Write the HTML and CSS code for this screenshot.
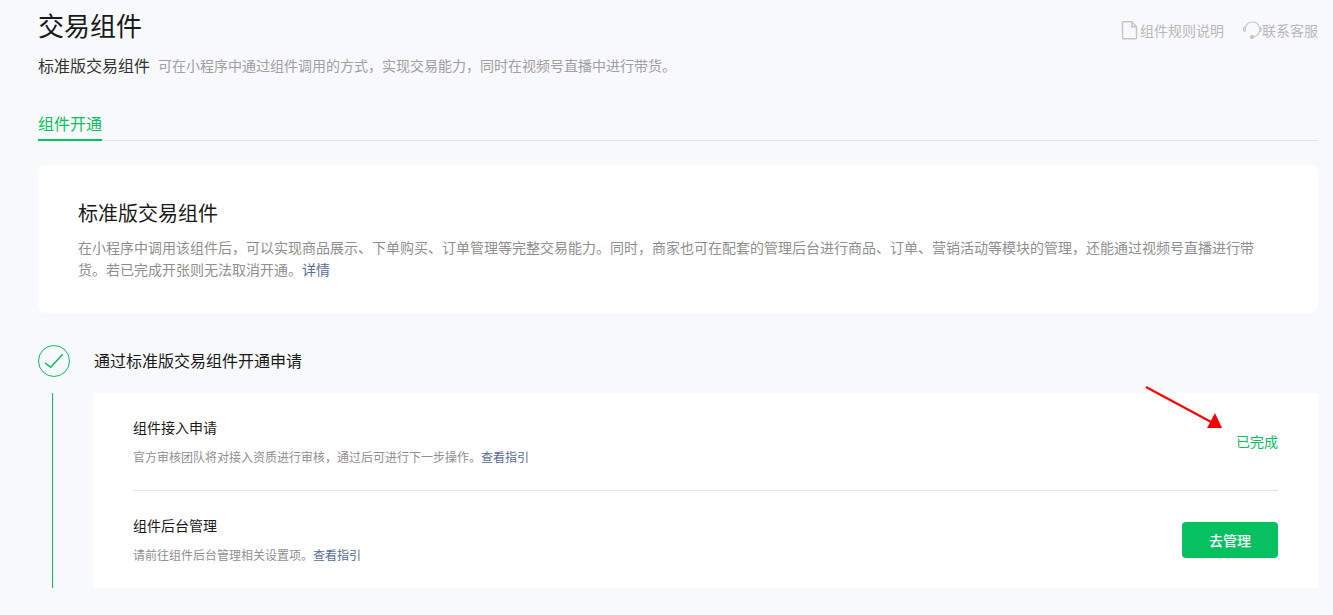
FILE: index.html
```html
<!DOCTYPE html>
<html lang="zh-CN">
<head>
<meta charset="utf-8">
<title>交易组件</title>
<link rel="stylesheet" href="styles.css">
</head>
<body>
<main class="page">
  <header class="head">
    <div class="head-main">
      <h1 class="title">交易组件</h1>
      <p class="sub"><span class="sub-name">标准版交易组件</span><span class="sub-desc">可在小程序中通过组件调用的方式，实现交易能力，同时在视频号直播中进行带货。</span></p>
    </div>
    <div class="head-links">
      <a class="head-link">
        <svg class="ico" width="19" height="20" viewBox="0 0 19 20" fill="none" stroke="#c4c4c4" stroke-width="1.4"><path d="M2.500 1.700h8.300l4.700 5v11a1 1 0 0 1-1 1h-12a1 1 0 0 1-1-1v-15a1 1 0 0 1 1-1z"/><path d="M10.800 1.700v5h4.700"/></svg>
        <span>组件规则说明</span>
      </a>
      <a class="head-link">
        <svg class="ico" width="20" height="20" viewBox="0 0 20 20" fill="none" stroke="#c4c4c4" stroke-width="1.200"><path d="M3.500 7.500a7.200 7.200 0 0 1 14 0"/><path d="M17.500 11c-.6 3.500-2.800 5.200-6 5.800"/><ellipse cx="2.500" cy="9.300" rx="1" ry="2"/><ellipse cx="18.500" cy="9.300" rx=".7" ry="2"/><circle cx="10" cy="17" r="1.500" fill="#c4c4c4"/></svg>
        <span>联系客服</span>
      </a>
    </div>
  </header>

  <nav class="tabs"><a class="tab">组件开通</a></nav>

  <section class="card">
    <h2 class="card-title">标准版交易组件</h2>
    <p class="card-desc">在小程序中调用该组件后，可以实现商品展示、下单购买、订单管理等完整交易能力。同时，商家也可在配套的管理后台进行商品、订单、营销活动等模块的管理，还能通过视频号直播进行带货。若已完成开张则无法取消开通。<a class="link">详情</a></p>
  </section>

  <section class="step">
    <div class="step-head">
      <svg class="step-ico" width="32" height="32" viewBox="0 0 32 32" fill="none" stroke="#07c160"><circle cx="16" cy="16" r="15.500"/><path d="M7 18l5.700 4.300L24.700 9.300" stroke-width="1.500"/></svg>
      <h3 class="step-title">通过标准版交易组件开通申请</h3>
    </div>
    <div class="step-body">
      <div class="rail"><span class="rail-line"></span></div>
      <div class="panel">
        <div class="row row-first">
          <div class="row-text">
            <h4 class="row-title">组件接入申请</h4>
            <p class="row-desc">官方审核团队将对接入资质进行审核，通过后可进行下一步操作。<a class="link">查看指引</a></p>
          </div>
          <span class="done">已完成</span>
        </div>
        <div class="row row-second">
          <div class="row-text">
            <h4 class="row-title">组件后台管理</h4>
            <p class="row-desc">请前往组件后台管理相关设置项。<a class="link">查看指引</a></p>
          </div>
          <button class="btn" type="button">去管理</button>
        </div>
      </div>
    </div>
  </section>

  <svg class="arrow" width="90" height="50" viewBox="0 0 90 50"><path d="M1 1L68 37" stroke="#f00" stroke-width="2" fill="none"/><path d="M77 42L62 42L70 27z" fill="#f00"/></svg>
</main>
</body>
</html>
```
FILE: styles.css
```css
* { box-sizing: border-box; }
html, body { margin: 0; padding: 0; height: 615px; overflow: hidden; }
body {
  background: #f8f9fb;
  color: #000;
  font-family: "Noto Sans CJK SC", "Liberation Sans", sans-serif;
}
h1, h2, h3, h4, p { margin: 0; font-weight: 400; }
.page { position: relative; height: 615px; padding: 0 15px 0 38px; }
.head { display: flex; justify-content: space-between; align-items: flex-start; height: 116px; }
.title { font-size: 26px; line-height: 36px; margin-top: 7px; color: #1a1a1a; }
.sub { display: flex; align-items: center; margin-top: 11px; line-height: 22px; }
.sub-name { font-size: 16px; color: #333; }
.sub-desc { font-size: 14px; color: #a0a0a0; margin-left: 8px; }
.head-links { display: flex; gap: 18px; margin: 20px 0 0 0; }
.head-link { display: flex; align-items: center; font-size: 14px; color: #b8b8b8; line-height: 20px; }
.ico { flex: none; }
.tabs { height: 25px; border-bottom: 1px solid #e2e3e5; display: flex; }
.tab { font-size: 16px; line-height: 14px; height: 25px; color: #07c160; border-bottom: 2px solid #07c160; }
.card {
  margin-top: 24px;
  height: 148px;
  background: #fff;
  border-radius: 8px;
  padding: 34px 40px 0;
}
.card-title { font-size: 20px; line-height: 28px; color: #1a1a1a; }
.card-desc { margin-top: 9px; font-size: 14px; line-height: 22px; color: #8f8f8f; }
.link { color: #576b95; }
.step { margin-top: 32px; }
.step-head { display: flex; align-items: center; height: 32px; gap: 24px; }
.step-ico { flex: none; }
.step-title { font-size: 16px; line-height: 30px; padding-bottom: 2px; color: #1a1a1a; }
.step-body { display: flex; margin-top: 16px; height: 195px; }
.rail { width: 55px; flex: none; padding-left: 14px; }
.rail-line { display: block; width: 1px; height: 100%; background: #07c160; }
.panel { flex: 1; background: #fff; padding: 0 40px; display: flex; flex-direction: column; }
.row { display: flex; justify-content: space-between; align-items: center; }
.row-first { height: 98px; border-bottom: 1px solid #e6e6e6; }
.row-second { height: 97px; }
.row-title { font-size: 14px; line-height: 20px; color: #1a1a1a; }
.row-desc { margin-top: 11px; font-size: 12px; line-height: 18px; color: #8f8f8f; }
.done { font-size: 14px; color: #07c160; padding-bottom: 2px; }
.btn {
  width: 96px;
  height: 36px;
  border: 0;
  border-radius: 4px;
  background: #07c160;
  color: #fff;
  font: 500 14px "Noto Sans CJK SC", "Liberation Sans", sans-serif;
}
.arrow { position: absolute; left: 1145px; top: 386px; }
```
